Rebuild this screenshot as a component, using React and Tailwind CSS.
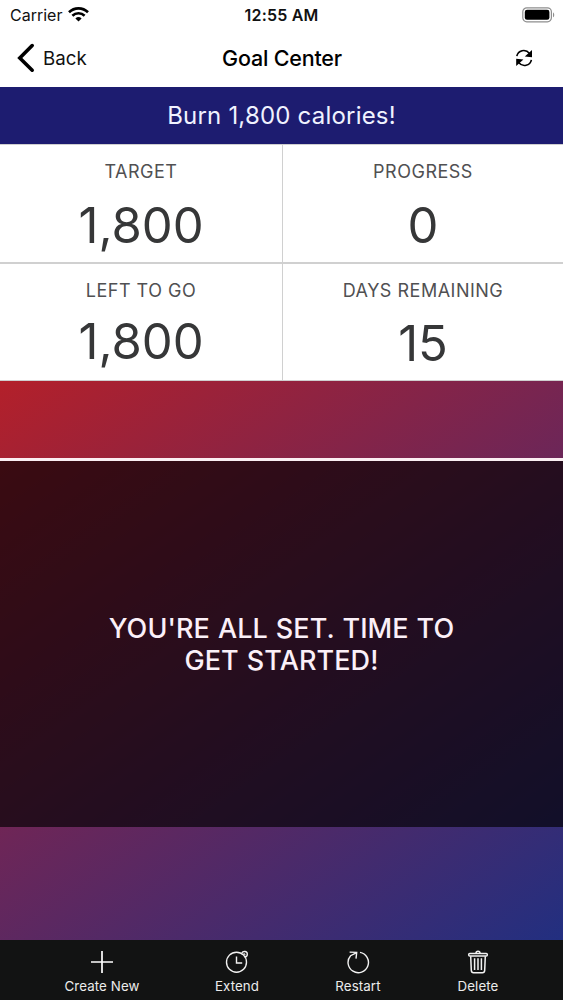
import React from "react";

const stats = [
  { label: "TARGET", value: "1,800", valueClass: "mt-[20px]" },
  { label: "PROGRESS", value: "0", valueClass: "mt-[20px]" },
  { label: "LEFT TO GO", value: "1,800", valueClass: "mt-[17px]" },
  { label: "DAYS REMAINING", value: "15", valueClass: "mt-[19px]" },
];

const WifiIcon = () => (
  <svg width="21" height="15" viewBox="0 0 21 15" fill="none" stroke="#000" strokeWidth="2.6">
    <path d="M1 5.2a13.6 13.6 0 0 1 19 0" />
    <path d="M4.4 8.7a8.7 8.7 0 0 1 12.2 0" />
    <path d="M7.4 11.5a4.5 4.5 0 0 1 6.2 0L10.5 14.6z" fill="#000" stroke="none" />
  </svg>
);

const BatteryIcon = () => (
  <svg width="34" height="16" viewBox="0 0 34 16" fill="none">
    <rect x="0.8" y="0.8" width="28.6" height="14" rx="4" stroke="#8e8e8e" strokeWidth="1.2" />
    <rect x="2.8" y="2.8" width="24.6" height="10" rx="2.2" fill="#000" />
    <path d="M31 5.4c1.6.6 1.6 4.2 0 4.8z" fill="#8e8e8e" />
  </svg>
);

const BackIcon = () => (
  <svg width="18" height="30" viewBox="0 0 18 30" fill="none" stroke="#000" strokeWidth="3.6" strokeLinecap="round" strokeLinejoin="miter">
    <path d="M15.2 2.6L2.8 15l12.4 12.2" />
  </svg>
);

const SyncIcon = () => (
  <svg width="18" height="18" viewBox="0 0 18 18" fill="none" stroke="#000" strokeWidth="1.6">
    <path d="M1.8 7.2C3 1.2 10.5-.6 14.6 4.4" />
    <path d="M16.4 10.8C15.2 16.8 7.700 18.600 3.600 13.600" />
    <path d="M17 1v7.200L9.800 7.400z" fill="#000" stroke="none" />
    <path d="M1.200 17V9.800l7.200.8z" fill="#000" stroke="none" />
  </svg>
);

const PlusIcon = () => (
  <svg width="24" height="24" viewBox="0 0 24 24" fill="none" stroke="#fff" strokeWidth="1.7">
    <path d="M12 1v22M1 12h22" />
  </svg>
);

const ExtendIcon = () => (
  <svg width="24" height="24" viewBox="0 0 24 24" fill="none" stroke="#f2f2f2" strokeWidth="1.4">
    <circle cx="11.5" cy="12.2" r="10" />
    <path d="M11.5 6.600v6.400h5.700" />
    <path d="M16.800 3c1.200-2.300 5.400-2 5.500.9.100 1.900-1.200 2.900-2.500 3.100" />
    <path d="M17.800 4.200l1.800-.4.600 1.600" strokeWidth="1.100" />
  </svg>
);

const RestartIcon = () => (
  <svg width="24" height="24" viewBox="0 0 24 24" fill="none" stroke="#f2f2f2" strokeWidth="1.4">
    <path d="M14 2.400A10.200 10.200 0 1 1 4.600 5.700L10.200 2.800" />
    <path d="M3.600 2.100l7.100.3-.7 6.200" />
  </svg>
);

const TrashIcon = () => (
  <svg width="24" height="24" viewBox="0 0 24 24" fill="none" stroke="#f2f2f2" strokeWidth="1.5">
    <path d="M10 3.200c0-2.600 4-2.600 4 0" />
    <rect x="2.700" y="3.400" width="18.600" height="2.600" rx="1" />
    <path d="M4.700 6.300l.6 14.100c.1 1.500.9 2.300 2.200 2.300h9c1.300 0 2.100-.8 2.200-2.300l.6-14.100" />
    <path d="M8.600 8.200v11.800M12 8.200v11.800M15.400 8.200v11.800" />
  </svg>
);

const actions = [
  { label: "Create New", icon: <PlusIcon />, width: "w-[150px]" },
  { label: "Extend", icon: <ExtendIcon />, width: "w-[120px]" },
  { label: "Restart", icon: <RestartIcon />, width: "w-[122px]" },
  { label: "Delete", icon: <TrashIcon />, width: "w-[118px]" },
];

const App = () => {
  return (
    <div className="w-[563px] h-[1000px] flex flex-col overflow-hidden bg-white font-['Inter',sans-serif]">
      {/* STATUS BAR */}
      <div className="h-[29px] shrink-0 grid grid-cols-3 items-center pl-[10px] pr-[7px] text-[#111]">
        <div className="flex items-center gap-[6px]">
          <span className="text-[16px] leading-[20px]">Carrier</span>
          <WifiIcon />
        </div>
        <span className="text-center text-[16px] leading-[20px] tracking-[0.2px] font-semibold whitespace-nowrap pr-[3px]">12:55 AM</span>
        <div className="flex justify-end">
          <BatteryIcon />
        </div>
      </div>

      {/* NAV BAR */}
      <div className="h-[58px] shrink-0 grid grid-cols-3 items-center pl-[17px] pr-[30px]">
        <div className="flex items-center gap-[8px]">
          <BackIcon />
          <span className="pt-[2px] text-[18.7px] leading-[24px] text-[#111]">Back</span>
        </div>
        <h1 className="pl-[14px] text-center text-[21.5px] leading-[28px] tracking-[-0.2px] font-medium whitespace-nowrap">Goal Center</h1>
        <div className="flex justify-end">
          <SyncIcon />
        </div>
      </div>

      {/* GOAL BANNER */}
      <div className="h-[57px] shrink-0 flex items-center justify-center bg-[#1d1c70] text-[#f0f2ff]">
        <span className="pt-px text-[24px] leading-[30px] tracking-[0.2px]">Burn 1,800 calories!</span>
      </div>

      {/* STATS */}
      <div className="h-[237px] shrink-0 grid grid-cols-[282px_280px] grid-rows-2 gap-x-[1px] gap-y-[2px] border-y border-[#cfcfcf] bg-[#d0d0d0]">
        {stats.map((stat) => (
          <div key={stat.label} className="flex flex-col items-center bg-white pt-[15px]">
            <span className="text-[18px] leading-[24px] tracking-[0.5px] text-[#505052]">{stat.label}</span>
            <span className={`text-[49px] leading-[44px] text-[#363738] ${stat.valueClass}`}>{stat.value}</span>
          </div>
        ))}
      </div>

      {/* MESSAGE */}
      <div className="h-[559px] shrink-0 flex flex-col bg-linear-[145deg,#b3202a,#6c2658_49%,#222f80]">
        <div className="h-[77px] shrink-0" />
        <div className="h-[369px] shrink-0 flex items-center justify-center border-t-[3px] border-[#fbeef2] bg-black/65 bg-clip-padding">
          <p className="pt-[2px] text-center text-[27px] leading-[32px] font-medium tracking-[0.1px] [word-spacing:0.6px] text-[#fbf0f8]">
            YOU'RE ALL SET. TIME TO
            <br />
            GET STARTED!
          </p>
        </div>
      </div>

      {/* TOOLBAR */}
      <div className="h-[60px] shrink-0 flex bg-[#121313] pl-[27px] text-[#ececec]">
        {actions.map((action) => (
          <button key={action.label} className={`flex flex-col items-center pt-[10px] ${action.width}`}>
            {action.icon}
            <span className="mt-[4px] text-[13.3px] leading-[17px] tracking-[0.1px]">{action.label}</span>
          </button>
        ))}
      </div>
    </div>
  );
};

export default App;
